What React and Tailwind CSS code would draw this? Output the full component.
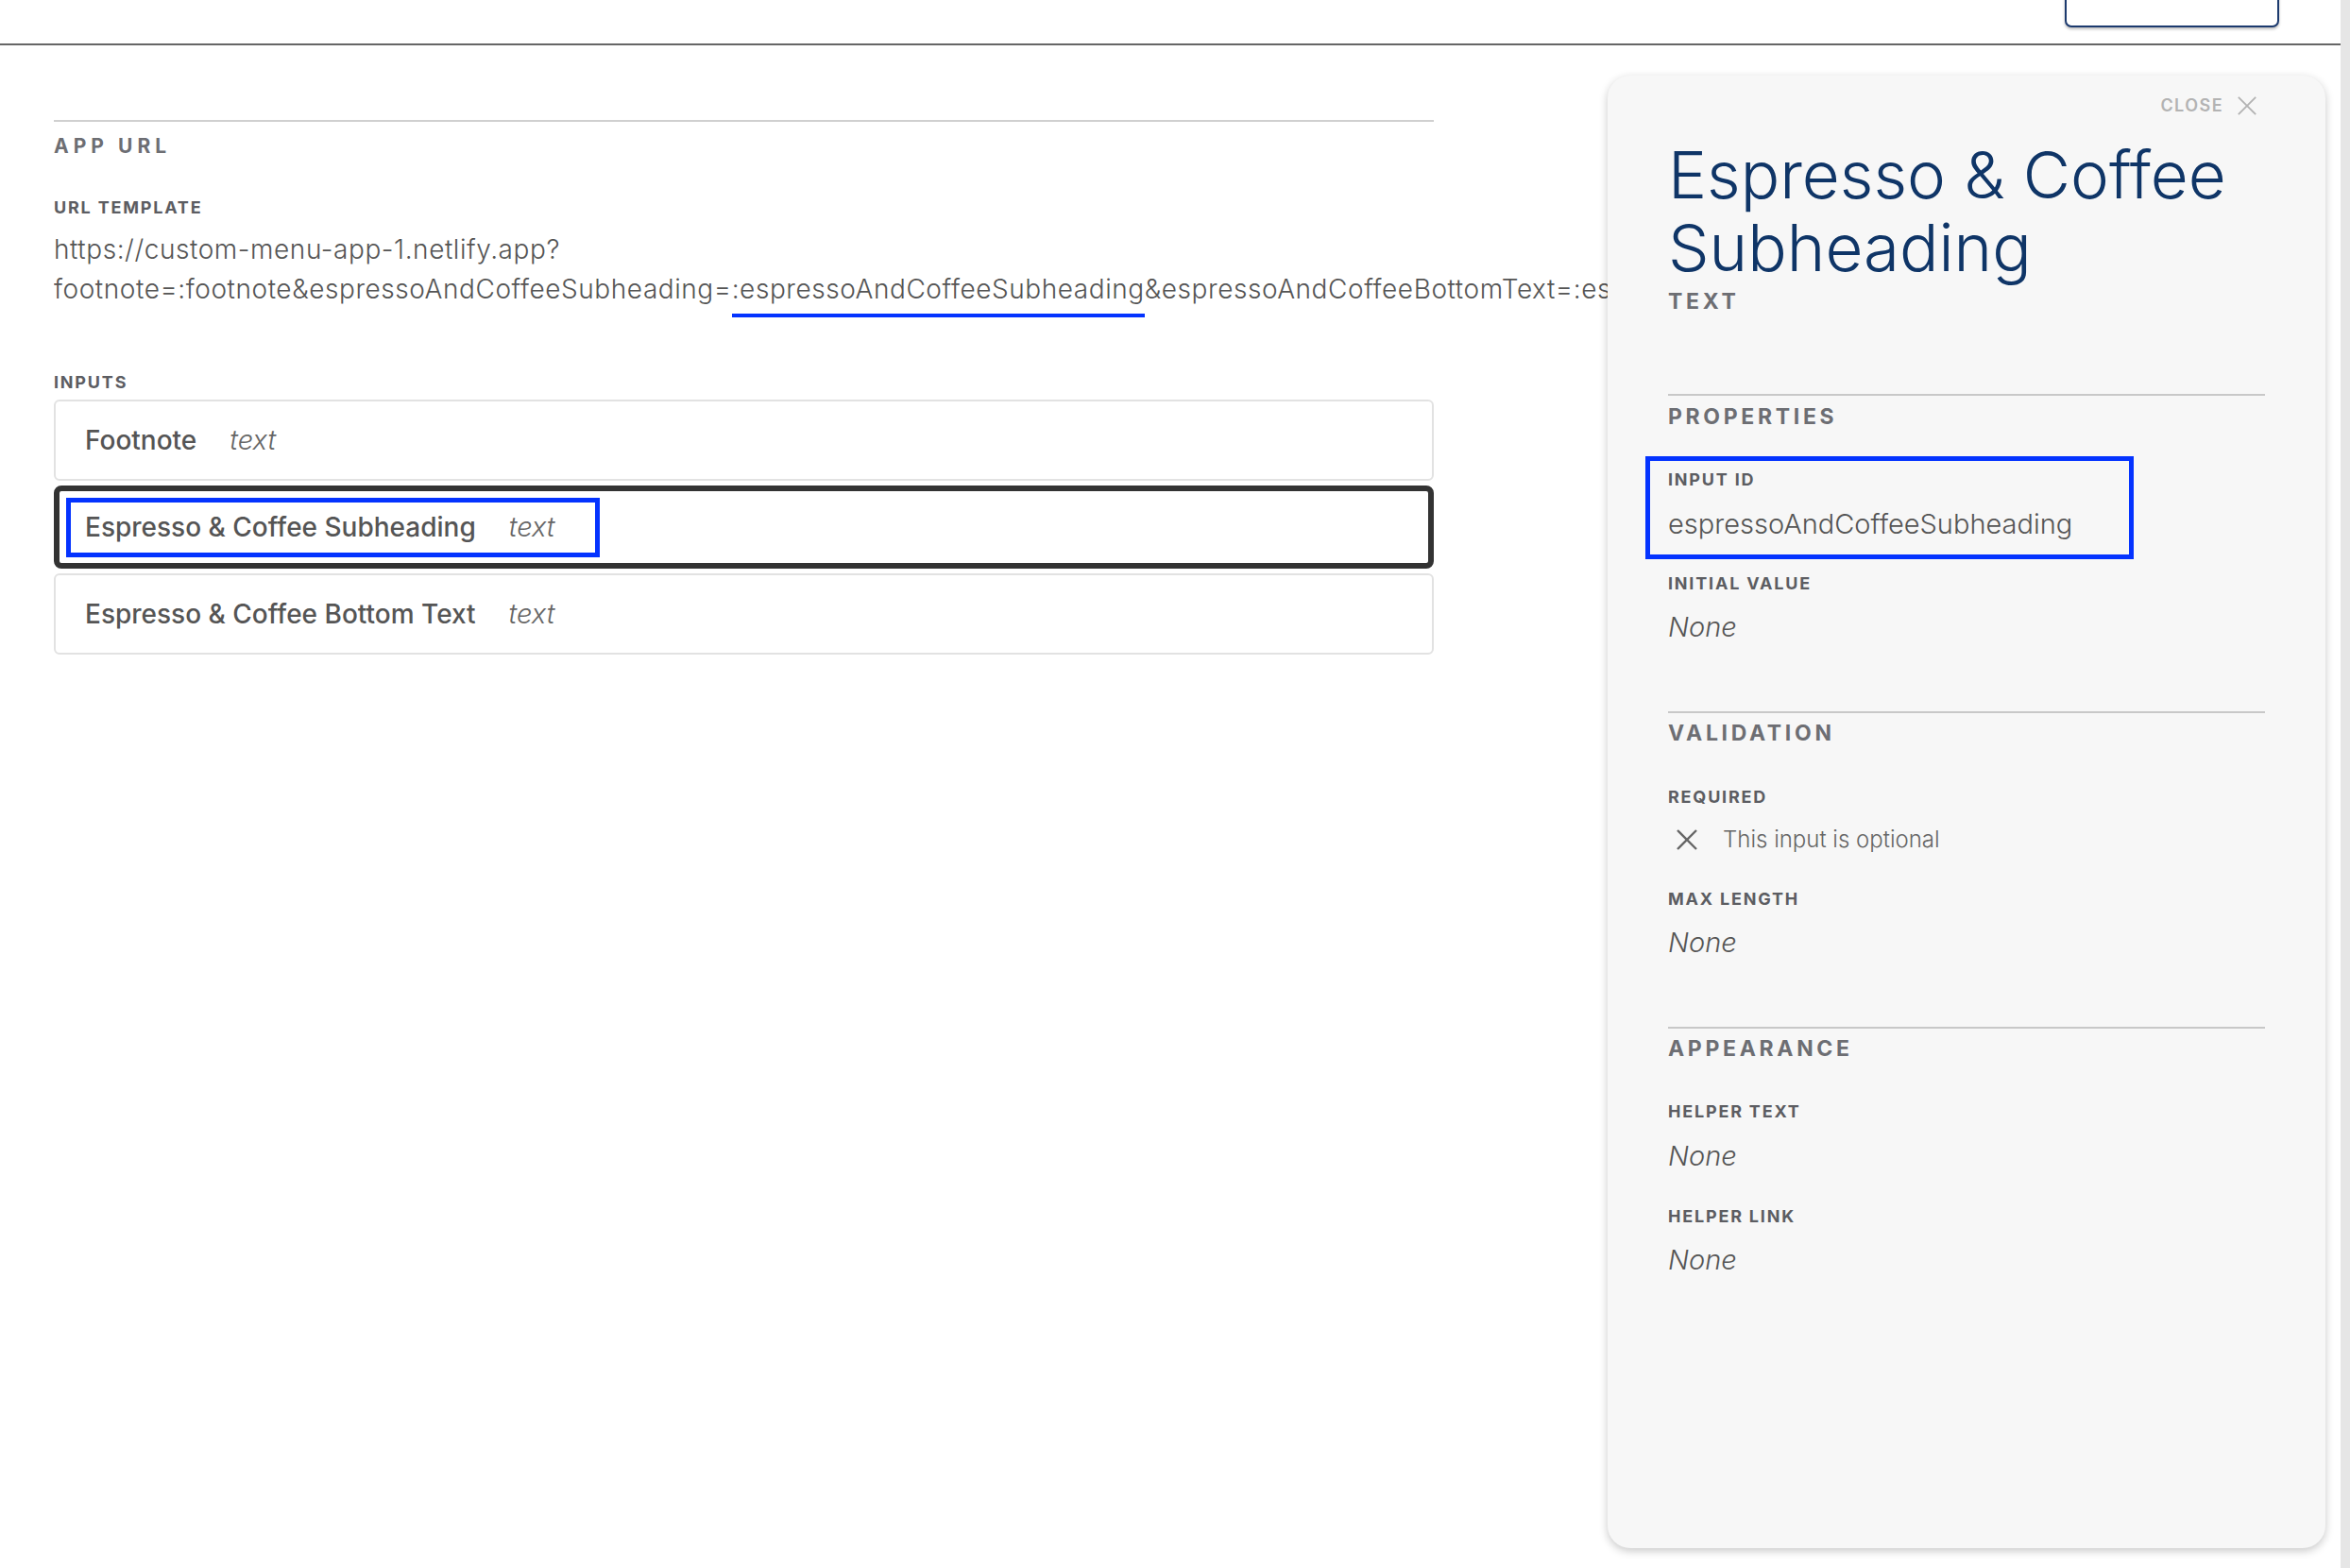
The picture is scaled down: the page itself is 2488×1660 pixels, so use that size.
const FieldLabel = ({ children, className = '' }) => (
  <div className={`text-[18px] leading-none font-bold tracking-[0.1em] text-[#5c5d62] ${className}`}>{children}</div>
);

const SectionTitle = ({ children, className = '' }) => (
  <div className={`text-[23px] leading-none font-bold tracking-[0.16em] text-[#6d6e73] ${className}`}>{children}</div>
);

const NoneValue = ({ className = '' }) => (
  <div className={`text-[29px] leading-none italic font-light text-[#555] ${className}`}>None</div>
);

const XIcon = ({ size = 22, color = '#b3b3b3', width = 2 }) => (
  <svg width={size} height={size} viewBox="0 0 24 24" fill="none">
    <path d="M2 2L22 22M22 2L2 22" stroke={color} strokeWidth={width} />
  </svg>
);

const inputs = [
  { label: 'Footnote', selected: false },
  { label: 'Espresso & Coffee Subheading', selected: true },
  { label: 'Espresso & Coffee Bottom Text', selected: false },
];

export default function App() {
  return (
    <div className="flex h-[1660px] w-full overflow-hidden bg-white font-[Inter,sans-serif]">
      <div className="flex min-w-0 flex-1 flex-col overflow-hidden">
        {/* top bar */}
        <header className="flex h-[48px] shrink-0 items-start justify-end border-b-2 border-[#666] pr-[65px]">
          <button className="-mt-[14px] h-[43px] w-[227px] rounded-b-[7px] border-2 border-[#1c3a6e] bg-white shadow-[0_2px_3px_rgba(0,0,0,0.25)]" />
        </header>

        <div className="flex flex-1 items-start">
          {/* left column */}
          <section className="ml-[57px] w-[1461px] shrink-0">
            <div className="mt-[79px] border-t-2 border-[#d0d0d0]" />
            <div className="mt-[15px] text-[21px] leading-none font-bold tracking-[0.24em] text-[#6d6e73]">APP URL</div>
            <FieldLabel className="mt-[46px]">URL TEMPLATE</FieldLabel>
            {/* url runs on under the drawer, clip it at the drawer edge */}
            <div className="mt-[14px] w-[1645px] overflow-hidden pb-[12px]">
              <p className="whitespace-nowrap text-[28px] leading-[42px] font-light tracking-[0.02em] text-[#555]">
                https://custom-menu-app-1.netlify.app?
                <br />
                footnote=:footnote&amp;espressoAndCoffeeSubheading=
                <span className="border-b-4 border-[#0433ff] pb-[9px]">:espressoAndCoffeeSubheading</span>
                &amp;espressoAndCoffeeBottomText=:espressoAndCoffeeBottomText
              </p>
            </div>

            <FieldLabel className="mt-[57px]">INPUTS</FieldLabel>
            <div className="mt-[9px] flex flex-col gap-[5px]">
              {inputs.map((item) =>
                item.selected ? (
                  <div key={item.label} className="flex h-[88px] items-center rounded-[8px] border-[6px] border-[#333]">
                    <div className="ml-[7px] flex h-[63px] w-[565px] items-center border-[5px] border-[#0433ff] pl-[15px]">
                      <span className="text-[28px] font-medium text-[#555]">{item.label}</span>
                      <span className="ml-[35px] text-[29px] italic font-light text-[#666]">text</span>
                    </div>
                  </div>
                ) : (
                  <div key={item.label} className="flex h-[86px] items-center rounded-[6px] border-2 border-[#e2e2e2] pl-[31px]">
                    <span className="text-[28px] font-medium text-[#555]">{item.label}</span>
                    <span className="ml-[35px] text-[29px] italic font-light text-[#666]">text</span>
                  </div>
                )
              )}
            </div>
          </section>

          {/* detail panel */}
          <aside className="relative z-10 mr-[16px] ml-auto mt-[32px] h-[1559px] w-[760px] shrink-0 rounded-[24px] bg-[#f7f7f7] px-[64px] pt-[21px] shadow-[0_3px_10px_rgba(0,0,0,0.22)]">
            <div className="flex h-[22px] items-center justify-end gap-[14px] pr-[8px]">
              <span className="text-[18px] leading-none font-semibold tracking-[0.08em] text-[#b3b3b3]">CLOSE</span>
              <XIcon />
            </div>

            <h1 className="mt-[24px] whitespace-nowrap text-[69px] leading-[77px] font-[350] text-[#0f3567]">
              Espresso &amp; Coffee
              <br />
              Subheading
            </h1>
            <SectionTitle className="mt-[7px] tracking-[0.14em]">TEXT</SectionTitle>

            <div className="mt-[86px] border-t-2 border-[#c8c8c8]" />
            <SectionTitle className="mt-[11px]">PROPERTIES</SectionTitle>
            <div className="-ml-[24px] mt-[30px] h-[109px] w-[517px] border-[5px] border-[#0433ff] pl-[19px] pt-[11px]">
              <FieldLabel>INPUT ID</FieldLabel>
              <div className="mt-[23px] text-[29px] leading-none font-light text-[#555]">espressoAndCoffeeSubheading</div>
            </div>
            <FieldLabel className="mt-[17px]">INITIAL VALUE</FieldLabel>
            <NoneValue className="mt-[22px]" />

            <div className="mt-[75px] border-t-2 border-[#c8c8c8]" />
            <SectionTitle className="mt-[10px]">VALIDATION</SectionTitle>
            <FieldLabel className="mt-[47px]">REQUIRED</FieldLabel>
            <div className="mt-[24px] flex h-[24px] items-center">
              <div className="ml-[8px]">
                <XIcon size={24} color="#666" width={2.4} />
              </div>
              <span className="ml-[26px] text-[24px] leading-none font-light text-[#666]">This input is optional</span>
            </div>
            <FieldLabel className="mt-[42px]">MAX LENGTH</FieldLabel>
            <NoneValue className="mt-[22px]" />

            <div className="mt-[75px] border-t-2 border-[#c8c8c8]" />
            <SectionTitle className="mt-[10px]">APPEARANCE</SectionTitle>
            <FieldLabel className="mt-[46px]">HELPER TEXT</FieldLabel>
            <NoneValue className="mt-[23px]" />
            <FieldLabel className="mt-[41px]">HELPER LINK</FieldLabel>
            <NoneValue className="mt-[22px]" />
          </aside>
        </div>
      </div>
      <div className="w-[10px] shrink-0 bg-[#e6e6e6]" />
    </div>
  );
}
